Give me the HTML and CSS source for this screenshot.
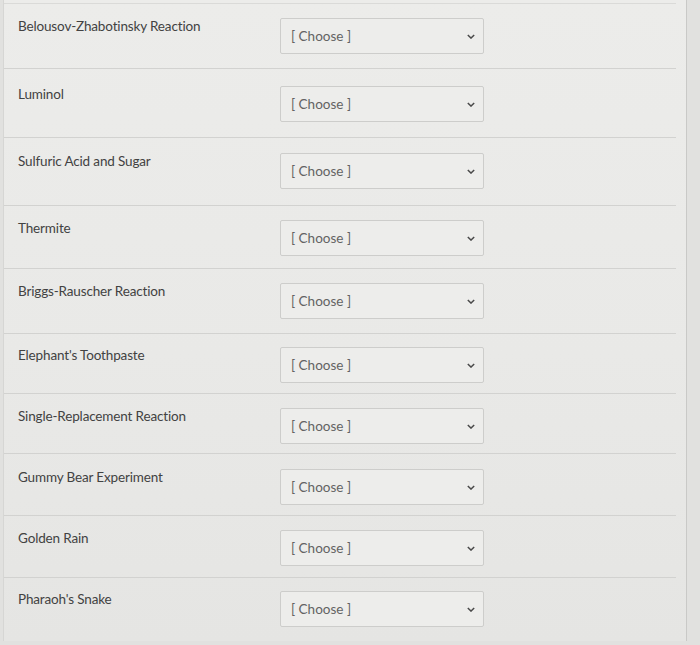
FILE: index.html
```html
<!DOCTYPE html>
<html>
<head>
<meta charset="utf-8">
<link rel="stylesheet" href="styles.css">
</head>
<body>
<div class="panel">
  <div class="row r1"><div class="label">Belousov-Zhabotinsky Reaction</div><div class="select"><span>[ Choose ]</span><svg class="chev" viewBox="0 0 10 6"><path d="M1 1 L5 5 L9 1" /></svg></div></div>
  <div class="row r2"><div class="label">Luminol</div><div class="select"><span>[ Choose ]</span><svg class="chev" viewBox="0 0 10 6"><path d="M1 1 L5 5 L9 1" /></svg></div></div>
  <div class="row r3"><div class="label">Sulfuric Acid and Sugar</div><div class="select"><span>[ Choose ]</span><svg class="chev" viewBox="0 0 10 6"><path d="M1 1 L5 5 L9 1" /></svg></div></div>
  <div class="row r4"><div class="label">Thermite</div><div class="select"><span>[ Choose ]</span><svg class="chev" viewBox="0 0 10 6"><path d="M1 1 L5 5 L9 1" /></svg></div></div>
  <div class="row r5"><div class="label">Briggs-Rauscher Reaction</div><div class="select"><span>[ Choose ]</span><svg class="chev" viewBox="0 0 10 6"><path d="M1 1 L5 5 L9 1" /></svg></div></div>
  <div class="row r6"><div class="label">Elephant's Toothpaste</div><div class="select"><span>[ Choose ]</span><svg class="chev" viewBox="0 0 10 6"><path d="M1 1 L5 5 L9 1" /></svg></div></div>
  <div class="row r7"><div class="label">Single-Replacement Reaction</div><div class="select"><span>[ Choose ]</span><svg class="chev" viewBox="0 0 10 6"><path d="M1 1 L5 5 L9 1" /></svg></div></div>
  <div class="row r8"><div class="label">Gummy Bear Experiment</div><div class="select"><span>[ Choose ]</span><svg class="chev" viewBox="0 0 10 6"><path d="M1 1 L5 5 L9 1" /></svg></div></div>
  <div class="row r9"><div class="label">Golden Rain</div><div class="select"><span>[ Choose ]</span><svg class="chev" viewBox="0 0 10 6"><path d="M1 1 L5 5 L9 1" /></svg></div></div>
  <div class="row r10"><div class="label">Pharaoh's Snake</div><div class="select"><span>[ Choose ]</span><svg class="chev" viewBox="0 0 10 6"><path d="M1 1 L5 5 L9 1" /></svg></div></div>
</div>
</body>
</html>
```
FILE: styles.css
```css
html, body {
  margin: 0;
  padding: 0;
  background: #e1e1df;
}
body {
  width: 700px;
  height: 645px;
  overflow: hidden;
  font-family: Lato, "Open Sans", sans-serif;
}
.panel {
  margin-left: 3px;
  width: 684px;
  height: 641px;
  background: linear-gradient(180deg, #ececea 0%, #e9e9e7 55%, #e5e5e3 100%);
  border-left: 1px solid #d6d6d4;
  border-right: 1px solid #c9c9c7;
  box-sizing: border-box;
  padding-top: 3px;
}
.row {
  height: 64px;
  margin-right: 10px;
  box-sizing: border-box;
  border-top: 1px solid #d2d2d0;
  display: flex;
  align-items: flex-start;
  padding: 14px 0 0 14px;
}
.r1 { height: 65px; border-top-color: #dadad8; }
.r2 { height: 69px; padding-top: 17px; }
.r3 { height: 68px; padding-top: 15px; }
.r4 { height: 63px; }
.r5 { height: 65px; }
.r6 { height: 60px; padding-top: 13px; }
.r7 { height: 60px; }
.r8 { height: 62px; padding-top: 15px; }
.r9 { height: 62px; }
.r10 { height: 64px; padding-top: 13px; }
.label {
  width: 262px;
  font-size: 13.5px;
  color: #424242;
  padding-top: 0;
  letter-spacing: -0.15px;
}
.select {
  width: 204px;
  height: 36px;
  box-sizing: border-box;
  border: 1px solid #cdcdcb;
  background: #ededeb;
  border-radius: 2px;
  display: flex;
  align-items: center;
  justify-content: space-between;
  padding: 0 8px 0 10px;
  font-size: 13.5px;
  color: #636363;
}
.chev {
  width: 8px;
  height: 5px;
  fill: none;
  stroke: #4a4a4a;
  stroke-width: 1.8;
}
```
